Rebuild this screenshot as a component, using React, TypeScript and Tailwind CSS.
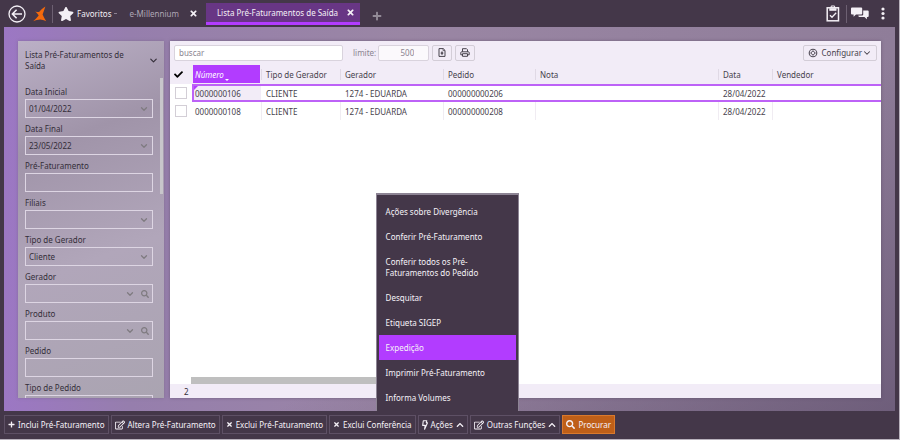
import { useState } from 'react';
import type { ReactNode } from 'react';
import { ChevronDown } from 'lucide-react';
import { FaCheck, FaChevronUp, FaPlus, FaRegEdit, FaSearch, FaStar, FaTimes } from 'react-icons/fa';

type FieldKind = 'text' | 'combo' | 'select' | 'lookup';

interface Field {
  id: string;
  label: string;
  kind: FieldKind;
  value: string;
}

interface Row {
  numero: string;
  tipo: string;
  gerador: string;
  pedido: string;
  nota: string;
  data: string;
  vendedor: string;
}

const fields: Field[] = [
  { id: 'data-inicial', label: 'Data Inicial', kind: 'combo', value: '01/04/2022' },
  { id: 'data-final', label: 'Data Final', kind: 'combo', value: '23/05/2022' },
  { id: 'pre-faturamento', label: 'Pré-Faturamento', kind: 'text', value: '' },
  { id: 'filiais', label: 'Filiais', kind: 'select', value: '' },
  { id: 'tipo-gerador', label: 'Tipo de Gerador', kind: 'select', value: 'Cliente' },
  { id: 'gerador', label: 'Gerador', kind: 'lookup', value: '' },
  { id: 'produto', label: 'Produto', kind: 'lookup', value: '' },
  { id: 'pedido', label: 'Pedido', kind: 'text', value: '' },
  { id: 'tipo-pedido', label: 'Tipo de Pedido', kind: 'select', value: '' },
];

const rows: Row[] = [
  { numero: '0000000106', tipo: 'CLIENTE', gerador: '1274 - EDUARDA', pedido: '000000000206', nota: '', data: '28/04/2022', vendedor: '' },
  { numero: '0000000108', tipo: 'CLIENTE', gerador: '1274 - EDUARDA', pedido: '000000000208', nota: '', data: '28/04/2022', vendedor: '' },
];

const columns = ['Tipo de Gerador', 'Gerador', 'Pedido', 'Nota', 'Data', 'Vendedor'];

const menuItems = [
  'Ações sobre Divergência',
  'Conferir Pré-Faturamento',
  'Conferir todos os Pré-Faturamentos do Pedido',
  'Desquitar',
  'Etiqueta SIGEP',
  'Expedição',
  'Imprimir Pré-Faturamento',
  'Informa Volumes',
];

function BackIcon() {
  return (
    <svg viewBox="0 0 18 18" className="size-[18px]" fill="none" stroke="#f4f0f6" aria-hidden="true">
      <circle cx="9" cy="9" r="8" strokeWidth="1.3" />
      <path d="M14 9H4.600M8.600 4.800L4.400 9l4.200 4.200" strokeWidth="1.600" />
    </svg>
  );
}

function Logo() {
  return (
    <svg viewBox="0 0 14 16" className="h-4 w-3.5" fill="#f4690c" aria-hidden="true">
      <path d="M12.400.5 9.600 8.400c.7 1.700 1.900 3.900 3.600 6.800-2.300-1.200-4.200-1.700-6-1.800-2.200.1-4.500.7-7 1.800 2-1.700 3.900-3.600 5.500-5.800C4.700 7.700 3.500 6.600 2 5.500c1.300.4 2.700.6 4.100.6C7.800 3.900 9.900 2 12.400.5z" />
    </svg>
  );
}

function ClipboardIcon() {
  return (
    <svg viewBox="0 0 14 17" className="h-[17px] w-3.5" fill="none" stroke="#f4f0f6" aria-hidden="true">
      <rect x="1.200" y="2.800" width="11.300" height="13" strokeWidth="1.500" />
      <path d="M3.600 3.500h6.600v2H3.600z" fill="#f4f0f6" strokeWidth=".6" />
      <path d="M5.200 3V1h3.400v2" strokeWidth="1" />
      <path d="M4 10.200l2 2 4.200-4.400" strokeWidth="1.300" />
    </svg>
  );
}

function ChatIcon() {
  return (
    <svg viewBox="0 0 18 13" className="h-[13px] w-[18px]" fill="#f4f0f6" aria-hidden="true">
      <path d="M1 .4h9.200q1 0 1 1v5q0 1-1 1H5L2.600 9.800V7.400H1q-1 0-1-1v-5q0-1 1-1z" />
      <path d="M12.200 3.400h4.500q1 0 1 1v4.600q0 1-1 1h-.8v2.300L13.500 10H8.400q-1 0-1-1v-.6h3.800q1 0 1-1z" />
    </svg>
  );
}

function DotsIcon() {
  return (
    <svg viewBox="0 0 4 13" className="h-[13px] w-1" fill="#f4f0f6" aria-hidden="true">
      <circle cx="2" cy="2" r="1.600" />
      <circle cx="2" cy="6.500" r="1.600" />
      <circle cx="2" cy="11" r="1.600" />
    </svg>
  );
}

function BoltIcon() {
  return (
    <svg viewBox="0 0 6 10" className="h-2.5 w-1.5" fill="none" stroke="currentColor" strokeWidth="1.100" aria-hidden="true">
      <path d="M1.300.7h3.500l-.5 2h1.200L2.600 9.200l.6-3.800H.7z" strokeLinejoin="round" />
    </svg>
  );
}

function ExportIcon() {
  return (
    <svg viewBox="0 0 8 9" className="h-[9px] w-2" fill="none" stroke="#47424c" aria-hidden="true">
      <path d="M1 .6h4.200L7 2.400v6H1z" />
      <path d="M5 .6v2h2" strokeWidth=".7" />
      <path d="M4 3.600v3.200M2.700 5.200h2.600" strokeWidth="1.300" />
    </svg>
  );
}

function PrinterIcon() {
  return (
    <svg viewBox="0 0 10 9" className="h-[9px] w-2.5" fill="none" stroke="#47424c" aria-hidden="true">
      <path d="M2.500 3.800V.7h4l1 1v2.100" />
      <path d="M2 6.800H.8V4.600q0-.8.8-.8h6.800q.8 0 .8.800v2.200H8" />
      <path d="M2.500 5.700h5v2.600h-5z" />
    </svg>
  );
}

function GlobeGearIcon() {
  return (
    <svg viewBox="0 0 10 10" className="size-2.5" fill="none" stroke="#56505c" aria-hidden="true">
      <circle cx="5" cy="5" r="3.800" strokeWidth="1.100" />
      <circle cx="5" cy="5" r="1.700" strokeWidth=".8" />
      <path d="M5 1v2.300M5 6.700V9M1 5h2.300M6.700 5H9" strokeWidth=".7" />
    </svg>
  );
}

function FilterField({ field }: { field: Field }) {
  const control =
    'block h-[19px] w-full appearance-none rounded-none border border-[#ddd5e3] bg-transparent px-[3px] pb-px text-[#342e39] outline-none';
  return (
    <div className="flex h-[37px] shrink-0 flex-col">
      <label htmlFor={field.id} className="h-[13px] leading-[11px]">
        {field.label}
      </label>
      <div className="relative">
        {field.kind === 'select' ? (
          <select id={field.id} defaultValue={field.value} className={control}>
            <option>{field.value}</option>
          </select>
        ) : (
          <input id={field.id} type="text" defaultValue={field.value} className={control} />
        )}
        {field.kind !== 'text' && (
          <span className="pointer-events-none absolute inset-y-0 right-1 flex items-center gap-1.5 text-[#7f7b80]">
            <ChevronDown className="size-2.5" strokeWidth={3} />
            {field.kind === 'lookup' && <FaSearch className="size-2" />}
          </span>
        )}
      </div>
    </div>
  );
}

function ActionButton({ icon, label, arrow, primary }: { icon: ReactNode; label: string; arrow?: boolean; primary?: boolean }) {
  return (
    <button
      type="button"
      className={`flex h-[19px] items-center gap-[3px] border px-[3px] whitespace-nowrap text-[#f6f2f8] ${
        primary ? 'border-[#d9792d] bg-[#bf5f18]' : 'border-[#5e5065]'
      }`}
    >
      {icon}
      {label}
      {arrow && <FaChevronUp className="size-2" />}
    </button>
  );
}

export default function App() {
  const [selected, setSelected] = useState(0);
  const [active, setActive] = useState('Expedição');

  return (
    <div className="flex h-screen flex-col border-r border-b border-[#b9b2bd] bg-[#443749] font-['Noto_Sans','Open_Sans',sans-serif] text-[8px] leading-[11px] text-[#342e39]">
      <header className="flex h-[27px] shrink-0 items-center pl-2 text-[#f4f0f6]">
        <button type="button" aria-label="Voltar">
          <BackIcon />
        </button>
        <span className="ml-[7px]">
          <Logo />
        </span>
        <span className="ml-[5px] h-[18px] w-px bg-[#6d6072]" />
        <button type="button" className="ml-[5px] flex items-center gap-[3px]">
          <FaStar className="size-4" />
          Favoritos
          <span className="h-px w-[3px] bg-[#8d8292]" />
        </button>
        <nav className="ml-3 flex h-full items-start pt-[3px]">
          <div className="flex h-[21px] items-center">
            <a href="#millennium" className="text-[#b0a7b6]">
              e-Millennium
            </a>
            <button type="button" aria-label="Fechar e-Millennium" className="ml-2.5">
              <FaTimes className="size-[9px]" />
            </button>
          </div>
          <div className="ml-2 flex h-[22px] items-center border-b-[3px] border-[#b23cff] bg-[#683685] pr-[5px] pl-[11px]">
            <a href="#lista">Lista Pré-Faturamentos de Saída</a>
            <button type="button" aria-label="Fechar lista" className="ml-2">
              <FaTimes className="size-[9px]" />
            </button>
          </div>
          <button type="button" aria-label="Nova aba" className="mt-2 ml-3 text-[#938b97]">
            <FaPlus className="size-2.5" />
          </button>
        </nav>
        <div className="mr-[14px] ml-auto flex items-center">
          <button type="button" aria-label="Tarefas">
            <ClipboardIcon />
          </button>
          <span className="mr-1 ml-1.5 h-[18px] w-px bg-[#6d6072]" />
          <button type="button" aria-label="Mensagens">
            <ChatIcon />
          </button>
          <button type="button" aria-label="Mais" className="ml-3">
            <DotsIcon />
          </button>
        </div>
      </header>

      <main className="mx-1 flex min-h-0 flex-1 gap-1.5 bg-[linear-gradient(150deg,#66567300_60%,#665673cc_100%),linear-gradient(90deg,#9c77c4_0%,#967ead_14%,#9a86a4_45%,#8f7d99_100%)] px-[14px] pt-[14px] pb-[13px]">
        <aside className="relative flex w-[146px] shrink-0 flex-col overflow-hidden bg-[linear-gradient(160deg,#bbb0c6_0%,#a094a9_28%,#b1a6ba_60%,#aaa4b1_100%)] pr-[11px] pl-[7px] shadow-[0_0_3px_#6b5b7877]">
          <div className="flex h-[45px] shrink-0 items-start justify-between pt-2">
            <h1 className="w-28">Lista Pré-Faturamentos de Saída</h1>
            <ChevronDown className="mt-1.5 -mr-1.5 size-[11px]" strokeWidth={2.5} />
          </div>
          {fields.map((field) => (
            <FilterField key={field.id} field={field} />
          ))}
          <span className="absolute top-[37px] right-px h-[116px] w-[3px] bg-[#c8c6cb]" />
        </aside>

        <section className="flex min-w-0 flex-1 flex-col bg-white shadow-[0_0_3px_#4d3f5988]">
          <div className="flex h-[23px] shrink-0 items-center bg-[#f2ecf7] px-1 text-[#8a8490]">
            <input
              type="text"
              aria-label="buscar"
              placeholder="buscar"
              className="h-4 w-[169px] rounded-xs border border-[#d9d3dd] bg-white px-1 pb-px outline-none placeholder:text-[#8a8490]"
            />
            <label htmlFor="limite" className="ml-2.5">
              limite:
            </label>
            <input
              id="limite"
              type="text"
              defaultValue="500"
              className="ml-0.5 h-4 w-[51px] rounded-xs border border-[#d9d3dd] bg-[#fbf9fc] pr-[14px] pb-px text-right outline-none"
            />
            <button type="button" aria-label="Exportar" className="ml-[3px] flex h-4 w-5 items-center justify-center rounded-xs border border-[#d3cdd7]">
              <ExportIcon />
            </button>
            <button type="button" aria-label="Imprimir" className="ml-[3px] flex h-4 w-5 items-center justify-center rounded-xs border border-[#d3cdd7]">
              <PrinterIcon />
            </button>
            <button type="button" className="ml-auto flex h-4 items-center gap-1 rounded-xs border border-[#d3cdd7] px-1 text-[#47424c]">
              <GlobeGearIcon />
              <span className="flex items-center">
                Configurar
                <ChevronDown className="size-2.5" strokeWidth={2.5} />
              </span>
            </button>
          </div>

          <table className="w-full table-fixed border-separate border-spacing-0 text-left text-[#47424c]">
            <colgroup>
              <col className="w-[22px]" />
              <col className="w-[69px]" />
              <col className="w-[79px]" />
              <col className="w-[103px]" />
              <col className="w-[92px]" />
              <col className="w-[183px]" />
              <col className="w-[54px]" />
              <col />
            </colgroup>
            <thead className="bg-[#f2ecf7]">
              <tr className="h-5">
                <th className="p-0 pl-1">
                  <FaCheck className="size-[9px] text-black" />
                </th>
                <th className="p-0 pl-px font-normal">
                  <div className="relative mr-px flex h-[18px] items-center bg-[#b23cff] pl-0.5 text-white italic">
                    Número
                    <span className="absolute bottom-0.5 left-8 border-x-2 border-t-2 border-x-transparent border-t-white" />
                  </div>
                </th>
                {columns.map((column) => (
                  <th key={column} className="p-0 font-normal">
                    <div className="border-l border-[#e0d9e5] pl-1">{column}</div>
                  </th>
                ))}
              </tr>
            </thead>
            <tbody>
              {rows.map((row, index) => {
                const on = index === selected;
                const cell = on
                  ? 'border-y-2 border-[#bd62f7] p-0 pl-[5px]'
                  : 'border-l border-[#f0ecf2] p-0 pl-1';
                return (
                  <tr key={row.numero} className="h-[18px]" onClick={() => setSelected(index)}>
                    <td className="p-0 pl-[5px]">
                      <input
                        type="checkbox"
                        aria-label={row.numero}
                        className="block size-3 appearance-none border border-[#d3ced6] bg-white"
                      />
                    </td>
                    <td className={on ? 'relative border-y-2 border-l-2 border-[#bd62f7] bg-[#f2ecf7] p-0 pl-px' : 'p-0 pl-[3px]'}>
                      {on && <span className="absolute top-0 left-0 border-t-4 border-r-4 border-t-[#b23cff] border-r-transparent" />}
                      {row.numero}
                    </td>
                    <td className={cell}>{row.tipo}</td>
                    <td className={cell}>{row.gerador}</td>
                    <td className={cell}>{row.pedido}</td>
                    <td className={cell}>{row.nota}</td>
                    <td className={cell}>{row.data}</td>
                    <td className={cell}>{row.vendedor}</td>
                  </tr>
                );
              })}
            </tbody>
          </table>

          <div className="mt-auto ml-[21px] h-[7px] w-1/3 bg-[#bfbfbf]" />
          <footer className="flex h-[14px] shrink-0 items-center bg-[#f2ecf7] pl-[14px]">{rows.length}</footer>
        </section>
      </main>

      <footer className="flex h-7 shrink-0 items-start gap-0.5 pt-1 pl-1">
        <ActionButton icon={<FaPlus className="size-[7px]" />} label="Inclui Pré-Faturamento" />
        <ActionButton icon={<FaRegEdit className="size-2.5" />} label="Altera Pré-Faturamento" />
        <ActionButton icon={<FaTimes className="size-[7px]" />} label="Exclui Pré-Faturamento" />
        <ActionButton icon={<FaTimes className="size-[7px]" />} label="Exclui Conferência" />
        <div className="relative">
          <ActionButton icon={<BoltIcon />} label="Ações" arrow />
          <ul className="absolute bottom-[23px] -left-[42px] w-[143px] border-x border-t-2 border-[#8d8494] bg-[#443749] px-0.5 pt-1 pb-px text-[#f6f2f8]">
            {menuItems.map((item) => (
              <li key={item}>
                <button
                  type="button"
                  onClick={() => setActive(item)}
                  className={`block w-full py-[7px] pr-6 pl-[7px] text-left ${item === active ? 'bg-[#b23cff]' : ''}`}
                >
                  {item}
                </button>
              </li>
            ))}
          </ul>
        </div>
        <ActionButton icon={<FaRegEdit className="size-2.5" />} label="Outras Funções" arrow />
        <ActionButton icon={<FaSearch className="size-[9px]" />} label="Procurar" primary />
      </footer>
    </div>
  );
}
